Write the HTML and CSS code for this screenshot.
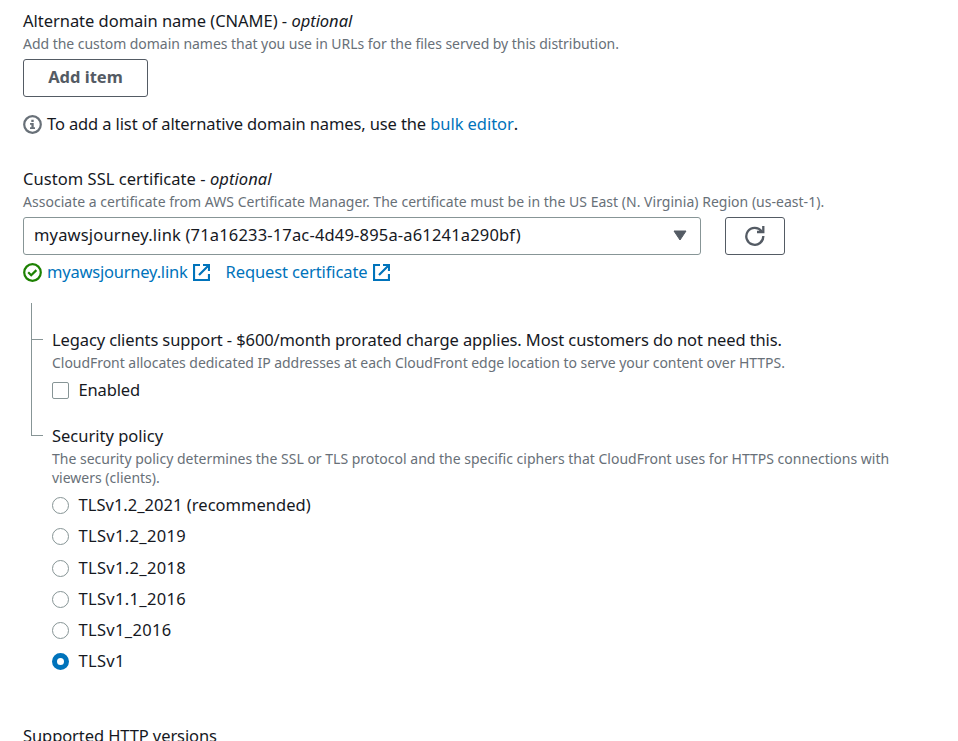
FILE: index.html
```html
<!DOCTYPE html>
<html lang="en">
<head>
<meta charset="utf-8">
<title>Distribution settings</title>
<link rel="stylesheet" href="styles.css">
</head>
<body>
<main class="form">
  <section class="field">
    <h2 class="label"><span class="t-cname">Alternate domain name (CNAME) - <i>optional</i></span></h2>
    <p class="hint"><span class="h-cname">Add the custom domain names that you use in URLs for the files served by this distribution.</span></p>
    <button class="button add"><span class="t-add">Add item</span></button>
    <div class="info">
      <svg class="status" viewBox="0 0 19 19"><circle cx="9.5" cy="9.5" r="8.3" fill="none" stroke="#687078" stroke-width="2.2"/><path d="M8.300 4.700h2.400V7H8.300zM7 8h3.700v4.300H12V14H7v-1.700h1.400V9.700H7z" fill="#687078"/></svg>
      <span class="t-info">To add a list of alternative domain names, use the <a>bulk editor</a>.</span>
    </div>
  </section>
  <section class="field certificate">
    <h2 class="label"><span class="t-cert">Custom SSL certificate - <i>optional</i></span></h2>
    <p class="hint"><span class="h-cert">Associate a certificate from AWS Certificate Manager. The certificate must be in the US East (N. Virginia) Region (us-east-1).</span></p>
    <div class="controls">
      <div class="select"><span class="t-select">myawsjourney.link (71a16233-17ac-4d49-895a-a61241a290bf)</span><svg class="caret" viewBox="0 0 14 11"><path d="M1 1h12L7 10z" fill="#545b64" stroke="#545b64" stroke-linejoin="round"/></svg></div>
      <button class="button refresh" aria-label="Refresh"><svg viewBox="0 0 20 20"><path d="M18.300 10A8.500 8.500 0 1 1 16.600 5.200" fill="none" stroke="#545b64" stroke-width="2.300"/><path d="M18.300 0v6H12" fill="none" stroke="#545b64" stroke-width="2.300"/></svg></button>
    </div>
    <div class="links">
      <svg class="status" viewBox="0 0 19 19"><circle cx="9.500" cy="9.500" r="8.300" fill="none" stroke="#1d8102" stroke-width="2.200"/><path d="M5.200 9.300l3 3 5.200-5.200" fill="none" stroke="#1d8102" stroke-width="2.200"/></svg>
      <a class="t-link">myawsjourney.link</a>
      <svg class="external" viewBox="0 0 17 17"><path d="M7 1H1v15h15v-6M10 1h6v6M16 1L6 11" fill="none" stroke="#0073bb" stroke-width="2.200"/></svg>
      <a class="t-request">Request certificate</a>
      <svg class="external" viewBox="0 0 17 17"><path d="M7 1H1v15h15v-6M10 1h6v6M16 1L6 11" fill="none" stroke="#0073bb" stroke-width="2.200"/></svg>
    </div>
  </section>
  <div class="tree">
    <div class="rail"><div class="branch first"></div><div class="branch second"></div></div>
    <div class="children">
      <section>
        <h2 class="label"><span class="t-legacy">Legacy clients support - $600/month prorated charge applies. Most customers do not need this.</span></h2>
        <p class="hint"><span class="h-legacy">CloudFront allocates dedicated IP addresses at each CloudFront edge location to serve your content over HTTPS.</span></p>
        <label class="option enabled"><span class="box"></span><span class="t-enabled">Enabled</span></label>
      </section>
      <section class="policy">
        <h2 class="label"><span class="t-policy">Security policy</span></h2>
        <p class="hint">The security policy determines the SSL or TLS protocol and the specific ciphers that CloudFront uses for HTTPS connections with<br>viewers (clients).</p>
        <div class="options">
          <label class="option"><span class="radio"></span><span class="t-rec">TLSv1.2_2021 (recommended)</span></label>
          <label class="option"><span class="radio"></span><span class="t-tls">TLSv1.2_2019</span></label>
          <label class="option"><span class="radio"></span><span class="t-tls">TLSv1.2_2018</span></label>
          <label class="option"><span class="radio"></span><span class="t-tls">TLSv1.1_2016</span></label>
          <label class="option"><span class="radio"></span><span class="t-tls">TLSv1_2016</span></label>
          <label class="option"><span class="radio checked"></span><span class="t-tls">TLSv1</span></label>
        </div>
      </section>
    </div>
  </div>
  <h2 class="label"><span class="t-http">Supported HTTP versions</span></h2>
</main>
</body>
</html>
```
FILE: styles.css
```css
* { box-sizing: border-box; }
html { overflow: hidden; }
body {
  margin: 0;
  height: 741px;
  overflow: hidden;
  background: #fff;
  color: #16191f;
  font-family: "Noto Sans", "Open Sans", sans-serif;
  font-size: 16.500px;
  white-space: nowrap;
}
.form { padding: 9px 23px 0; }
.label { margin: 0; height: 24px; line-height: 24px; font-size: 16.500px; font-weight: 400; }
.hint { margin: 0; line-height: 19px; padding: 1px 0; font-size: 14px; color: #687078; }
a { color: #0073bb; }
.button { display: flex; align-items: center; justify-content: center; padding: 0; height: 38px; border: 1px solid #545b64; border-radius: 3px; background: #fff; color: #545b64; font: 700 16.500px "Noto Sans", sans-serif; }
.add { width: 125px; margin-top: 5px; padding-bottom: 3px; }
.info { display: flex; align-items: center; gap: 5px; height: 24px; margin-top: 15px; }
.info span, .links a, .option span:last-child { padding-bottom: 2px; }
.status { width: 19px; height: 19px; flex: none; }
.certificate { margin-top: 31px; }
.controls { display: flex; gap: 24px; margin-top: 5px; }
.select { display: flex; align-items: center; justify-content: space-between; width: 678px; height: 38px; padding: 0 13px 1px 10px; border: 1px solid #879596; border-radius: 3px; }
.select span { padding-bottom: 2px; }
.caret { width: 14px; height: 11px; }
.refresh { width: 60px; padding-bottom: 1px; }
.refresh svg { width: 20px; height: 20px; }
.links { display: flex; align-items: center; height: 24px; margin-top: 5px; }
.links .t-link { margin-left: 5px; }
.links .t-request { margin-left: 16px; }
.external { width: 17px; height: 17px; margin-left: 6px; }
.t-link + .external { margin-left: 5px; }
.tree { display: flex; margin: 19px 0 50.200px 8px; }
.rail { width: 21px; }
.branch { width: 12px; border: solid #879596; border-width: 0 0 1px 1px; }
.first { height: 37px; }
.second { height: 96px; }
.children { padding-top: 25px; }
.enabled { margin-top: 5px; }
.policy { margin-top: 22px; }
.option { display: flex; align-items: center; gap: 9.500px; height: 24px; }
.options { display: grid; gap: 7.200px; margin-top: 5.800px; }
.box, .radio { width: 17px; height: 17px; border: 1px solid #879596; border-radius: 2px; }
.radio { border-radius: 50%; }
.checked { border: 5px solid #0073bb; }

/* Tracking per text */
.t-cname { letter-spacing: -0.030px; }
.h-cname, .h-legacy { letter-spacing: -0.040px; }
.t-info { letter-spacing: -0.120px; }
.t-info a { letter-spacing: -0.060px; }
.t-cert { letter-spacing: 0.050px; }
.h-cert { letter-spacing: 0.020px; }
.t-select { letter-spacing: 0.170px; }
.t-link { letter-spacing: -0.210px; }
.t-request { letter-spacing: -0.110px; }
.t-legacy { letter-spacing: -0.115px; }
.t-enabled { letter-spacing: -0.150px; }
.t-rec { letter-spacing: 0.030px; }
.t-tls { letter-spacing: 0.330px; }
.t-http { letter-spacing: -0.090px; }
```
